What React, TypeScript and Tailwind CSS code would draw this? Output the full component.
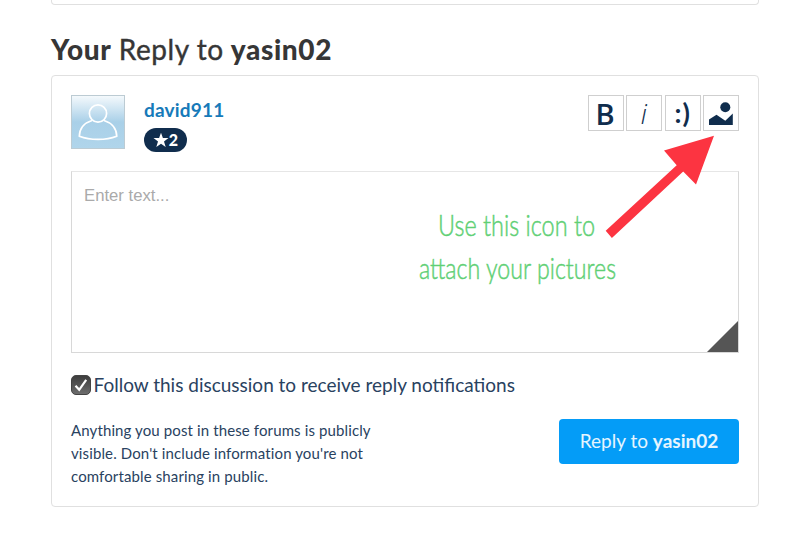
import type { ReactNode } from "react";

const user = { name: "david911", points: 2 };
const recipient = "yasin02";

function ToolButton({ label, children }: { label: string; children: ReactNode }) {
  return (
    <button
      type="button"
      aria-label={label}
      className="flex h-9 w-9 items-center justify-center border border-[#cfcfcf] bg-white text-[#102d4d]"
    >
      {children}
    </button>
  );
}

function Avatar() {
  return (
    <div className="h-[54px] w-[54px] border border-[#bccbd3] bg-linear-to-b from-[#f4f9fc] via-[#a9d0e8] via-50% to-[#b0d5eb]">
      <svg viewBox="0 0 52 52" className="h-full w-full" fill="none" stroke="#fff" strokeWidth="1.7">
        <circle cx="26" cy="17.5" r="8.6" />
        <path d="M20 24.500C12 27 7.500 33 7.300 40.300c11 4.200 26.500 4.200 37.500 0C44.500 33 40 27 32 24.500" strokeLinejoin="round" />
      </svg>
    </div>
  );
}

export default function App() {
  return (
    <main className="relative h-[536px] w-[800px] overflow-hidden bg-white pl-[51px] font-['Lato',sans-serif]">
      {/* End of the previous post */}
      <div className="h-[5px] w-[708px] rounded-b-[4px] border border-t-0 border-[#e0e0e0]" />

      <h2 className="mt-[26px] h-[44px] whitespace-nowrap text-[28px] leading-[36px] text-[#363636]">
        <b className="font-black tracking-[0.7px]">Your</b>{" "}
        <span className="tracking-[0.55px] [-webkit-text-stroke:0.4px_#363636]">Reply to</span>{" "}
        <b className="font-black tracking-[0.6px]">{recipient}</b>
      </h2>

      <section className="h-[432px] w-[708px] rounded-[4px] border border-[#e0e0e0] px-[19px] pt-[19px]">
        <div className="flex h-[76px] justify-between">
          <div className="flex">
            <Avatar />
            <div className="ml-[19px]">
              <a href="#" className="block h-[33px] text-[19px] leading-[29px] font-bold tracking-[0.2px] text-[#167ab9]">
                {user.name}
              </a>
              <span className="flex h-6 w-[43px] items-center justify-center rounded-full bg-[#102d4d] text-[16px] leading-none font-black text-white">
                <svg viewBox="0 0 16 16" className="h-4 w-4" fill="currentColor">
                  <path d="M8 .7 9.900 6H15.500L11 9.400 12.700 15 8 11.700 3.300 15 5 9.400.5 6H6.100z" />
                </svg>
                {user.points}
              </span>
            </div>
          </div>

          <div className="flex gap-[2.3px]">
            <ToolButton label="Bold">
              <span className="pr-0.5 font-['Open_Sans',sans-serif] text-[29px] leading-none font-semibold">B</span>
            </ToolButton>
            <ToolButton label="Italic">
              <span className="pr-px font-['Open_Sans',sans-serif] text-[27px] leading-none font-light italic">i</span>
            </ToolButton>
            <ToolButton label="Smiley">
              <span className="pb-0.5 text-[27px] leading-none font-bold tracking-[1px]">:)</span>
            </ToolButton>
            <ToolButton label="Add picture">
              <svg viewBox="0 0 24 24" className="h-6 w-6" fill="currentColor">
                <circle cx="16.300" cy="6.300" r="5" />
                <path d="M0 24.500v-6l7.500-4.700 8.800 6 7.500-7.200v11.900z" />
              </svg>
            </ToolButton>
          </div>
        </div>

        <div className="relative h-[182px] border border-t-[#e6e6e6] border-r-[#d8d8d8] border-b-[#d8d8d8] border-l-[#d8d8d8]">
          <textarea
            placeholder="Enter text..."
            className="block h-full w-full resize-none px-3 pt-3 font-['Liberation_Sans',sans-serif] text-[16.700px] leading-6 outline-none placeholder:text-[#aaa]"
          />
          <svg viewBox="0 0 31 31" className="absolute right-0 bottom-0 h-[31px] w-[31px]">
            <path d="M31 0V31H0z" fill="#555" />
          </svg>
        </div>

        <label className="mt-[19px] flex h-[26px] items-center text-[19px] text-[#29425f]">
          <svg viewBox="0 0 20 20" className="mr-[2.500px] mb-px h-5 w-5">
            <defs>
              <linearGradient id="box" x1="0" y1="0" x2="0" y2="1">
                <stop offset="0" stopColor="#3c3c3c" />
                <stop offset="1" stopColor="#6e6e6e" />
              </linearGradient>
            </defs>
            <rect x=".5" y=".5" width="19" height="19" rx="4.500" fill="url(#box)" stroke="#444" />
            <path d="m4.500 10.800 3.700 4 7-10" fill="none" stroke="#fff" strokeWidth="2.200" />
          </svg>
          <span className="whitespace-nowrap">Follow this discussion to receive reply notifications</span>
        </label>

        <div className="mt-[21px] flex justify-between">
          <p className="w-[320px] text-[15px] leading-[23px] tracking-[0.120px] text-[#29425f]">
            Anything you post in these forums is publicly
            <br />
            visible. Don't include information you're not
            <br />
            comfortable sharing in public.
          </p>
          <button
            type="button"
            className="h-[45px] w-[180px] rounded-[4px] bg-[#049cf7] text-[19px] whitespace-nowrap text-white/90"
          >
            Reply to <b>{recipient}</b>
          </button>
        </div>
      </section>

      {/* Hint drawn over the form */}
      <svg viewBox="0 0 800 536" className="pointer-events-none absolute inset-0 h-full w-full">
        <path
          d="M714 135.700 664 150.500l12.700 14.700-71 65.500 6.200 7.300 71.300-66.500 12.800 13z"
          fill="#fc3441"
        />
        <g
          fill="#5fd075"
          stroke="#5fd075"
          strokeWidth=".5"
          className="font-['Lato',sans-serif] text-[30px] font-light"
        >
          <text x="438" y="236" textLength="157" lengthAdjust="spacingAndGlyphs">
            Use this icon to
          </text>
          <text x="419" y="279" textLength="197" lengthAdjust="spacingAndGlyphs">
            attach your pictures
          </text>
        </g>
      </svg>
    </main>
  );
}
